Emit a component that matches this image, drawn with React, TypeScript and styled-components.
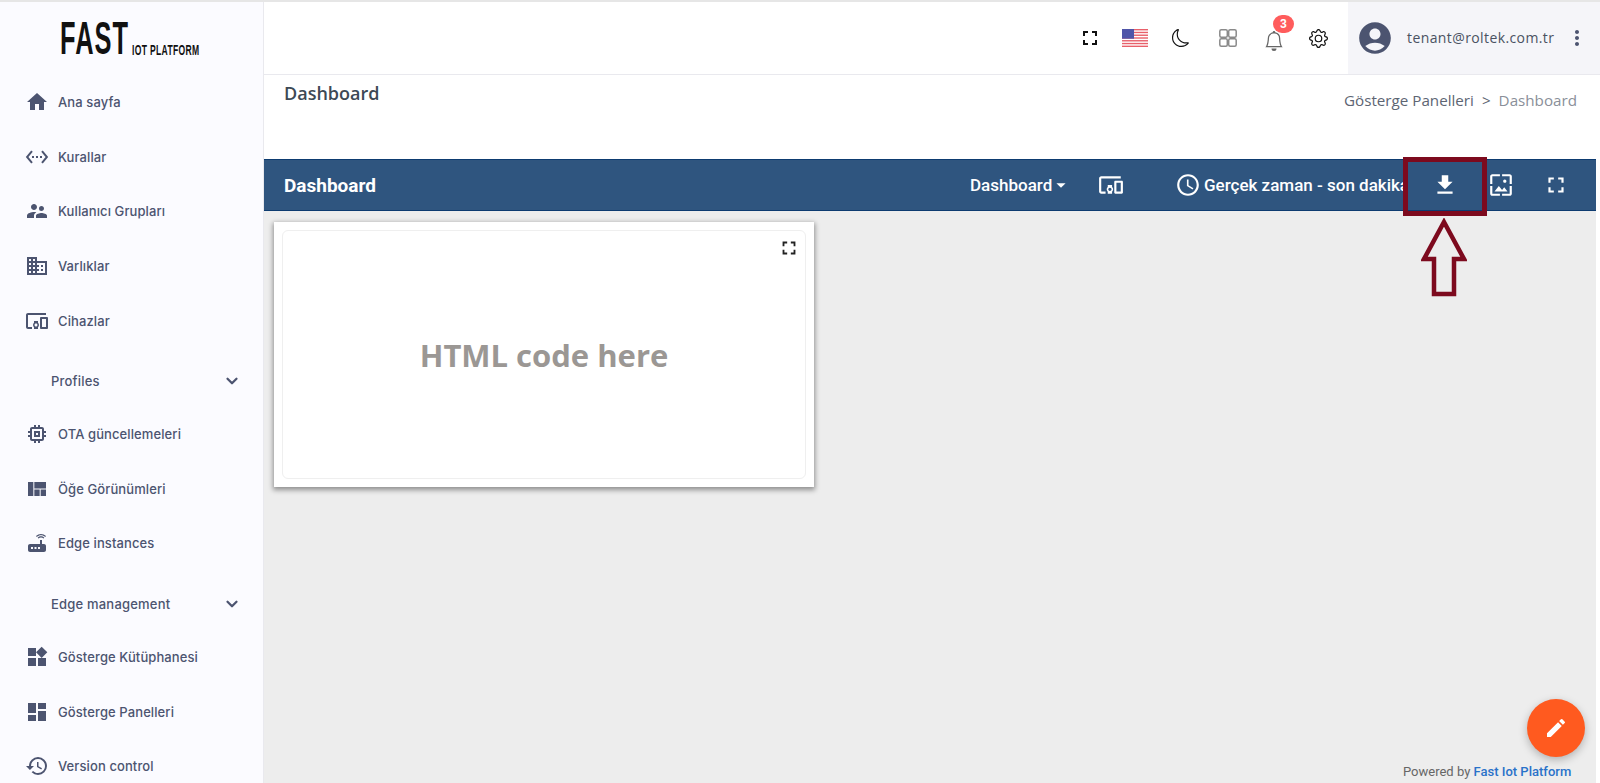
import React from "react";
import styled, { createGlobalStyle } from "styled-components";
import {
  MdHome,
  MdSettingsEthernet,
  MdSupervisorAccount,
  MdDomain,
  MdDevicesOther,
  MdMemory,
  MdViewQuilt,
  MdRouter,
  MdWidgets,
  MdDashboard,
  MdHistory,
  MdFullscreen,
  MdAccountCircle,
  MdMoreVert,
  MdAccessTime,
  MdFileDownload,
  MdOutlineWallpaper,
  MdEdit,
  MdArrowDropDown,
} from "react-icons/md";
import { BsMoon, BsBell, BsGear } from "react-icons/bs";
import { ChevronDown } from "lucide-react";

const GlobalStyle = createGlobalStyle`
  html, body {
    margin: 0;
    height: 100%;
    overflow: hidden;
    background: #fff;
  }
  * {
    box-sizing: border-box;
  }
`;

const Page = styled.div`
  display: flex;
  width: 1600px;
  height: 783px;
  overflow: hidden;
  position: relative;
  font-family: "Inter", "Roboto", sans-serif;
  border-top: 2px solid #e6e6e6;
`;

const Sidebar = styled.aside`
  flex: 0 0 264px;
  background: #fbfbff;
  border-right: 1px solid #e9e9ee;
  color: #4c5470;
`;

const LogoBox = styled.div`
  height: 73px;
  display: flex;
  align-items: flex-end;
  padding: 0 0 20px 60px;
  color: #111;
  font-family: "Liberation Sans", sans-serif;
  font-weight: 700;
`;

const LogoBig = styled.span`
  display: inline-block;
  width: 72px;
  font-size: 47px;
  line-height: 34px;
  height: 34px;
  letter-spacing: 2px;
  transform: scaleX(0.54);
  transform-origin: left center;
  white-space: nowrap;
`;

const LogoSmall = styled.span`
  display: inline-block;
  font-size: 15px;
  line-height: 11px;
  height: 11px;
  letter-spacing: 0.6px;
  transform: scaleX(0.57);
  transform-origin: left center;
  white-space: nowrap;
`;

const NavItem = styled.div`
  height: 54.6px;
  display: flex;
  align-items: center;
  padding-left: 25px;
  font-size: 13px;
  font-weight: 500;
  letter-spacing: 0.1px;

  svg {
    flex: 0 0 24px;
    font-size: 24px;
    margin-right: 9px;
  }
`;

const NavGroup = styled.div`
  height: 59px;
  padding: 8px 22px 0 51px;
  display: flex;
  align-items: center;
  justify-content: space-between;
  font-size: 13px;
  font-weight: 500;
  letter-spacing: 0.2px;
`;

const Main = styled.main`
  flex: 1;
  min-width: 0;
  display: flex;
  flex-direction: column;
  width: 1336px;
`;

const TopBar = styled.header`
  flex: 0 0 73px;
  display: flex;
  justify-content: flex-end;
  background: #fff;
  border-bottom: 1px solid #e9e9ee;
`;

const TopIcons = styled.div`
  display: flex;
  align-items: center;
`;

const TopIcon = styled.div<{ $w: number }>`
  width: ${(p) => p.$w}px;
  height: 100%;
  display: flex;
  align-items: center;
  justify-content: center;
  position: relative;
  color: #111;
`;

const Bell = styled(BsBell)`
  margin-top: 6px;
  color: #666;
`;

const Badge = styled.span`
  position: absolute;
  top: 13px;
  left: 22px;
  width: 21px;
  height: 18px;
  border-radius: 9px;
  background: #ff5c5c;
  color: #fff;
  font: 700 12px "Roboto", sans-serif;
  display: flex;
  align-items: center;
  justify-content: center;
`;

const UserBox = styled.div`
  width: 252px;
  margin-left: 7px;
  background: #f5f5f9;
  display: flex;
  align-items: center;
  padding-left: 8px;
  color: #4c5470;
  font-family: "Open Sans", sans-serif;
  font-size: 14px;
  letter-spacing: 0.4px;
`;

const Email = styled.span`
  margin-left: 13px;
  margin-top: -2px;
  width: 158px;
  color: #4a5262;
  white-space: nowrap;
`;

const PageHead = styled.div`
  flex: 0 0 84px;
  display: flex;
  justify-content: space-between;
  padding: 6px 23px 0 20px;
  background: #fff;
`;

const PageTitle = styled.h1`
  margin: 0;
  font: 600 18px "Open Sans", sans-serif;
  color: #3d4955;
  line-height: 24px;
`;

const Crumbs = styled.div`
  padding-top: 9px;
  font: 400 15.2px "Open Sans", sans-serif;
  color: #5d6573;
  white-space: nowrap;
`;

const CrumbSep = styled.span`
  margin: 0 8px;
`;

const CrumbLast = styled.span`
  color: #8a8f99;
`;

const Canvas = styled.div`
  flex: 1;
  width: 1332px;
  background: #ededed;
  display: flex;
  flex-direction: column;
`;

const DashBar = styled.div`
  flex: 0 0 52px;
  display: flex;
  align-items: center;
  background: #2f557f;
  border-top: 1px solid #0d3b70;
  border-bottom: 1px solid #0d3b70;
  color: #fff;
  font-family: "Roboto", sans-serif;
  padding-left: 20px;
`;

const BarTitle = styled.div`
  width: 686px;
  font-size: 19px;
  font-weight: 700;
`;

const BarMenu = styled.div`
  display: flex;
  align-items: center;
  width: 121px;
  font-size: 17px;
  font-weight: 500;

  svg {
    font-size: 22px;
    margin-left: -2px;
  }
`;

const BarIcon = styled.div<{ $w: number }>`
  flex: 0 0 ${(p) => p.$w}px;
  display: flex;
  justify-content: center;
  font-size: 26px;
`;

const TimeBox = styled.div`
  flex: 0 0 233px;
  overflow: hidden;
  margin: 0 9px 0 44px;
  display: flex;
  align-items: center;
  font-size: 17px;
  font-weight: 500;
  white-space: nowrap;

  svg {
    flex: 0 0 26px;
    font-size: 26px;
    margin-right: 3px;
  }
`;

const WidgetCard = styled.section`
  width: 540px;
  height: 265px;
  margin: 11px 0 0 10px;
  padding: 8px;
  background: #fff;
  box-shadow: 0 2px 5px 1px rgba(0, 0, 0, 0.4);
`;

const WidgetInner = styled.div`
  position: relative;
  height: 100%;
  border: 1px solid #efefef;
  border-radius: 6px;
  display: flex;
  align-items: center;
  justify-content: center;
  font: 700 31px "Open Sans", sans-serif;
  color: #9b9794;
`;

const WidgetExpand = styled.span`
  position: absolute;
  top: 6px;
  right: 5px;
  font-size: 22px;
  line-height: 0;
  color: #222;
`;

const Highlight = styled.div`
  position: absolute;
  left: 1403px;
  top: 155px;
  width: 84px;
  height: 59px;
  border: 5px solid #7d0a1e;
`;

const Arrow = styled.svg`
  position: absolute;
  left: 1421px;
  top: 216px;
`;

const Fab = styled.button`
  position: absolute;
  left: 1527px;
  top: 697px;
  width: 58px;
  height: 58px;
  border: 0;
  border-radius: 50%;
  background: #ff5a1f;
  color: #fff;
  display: flex;
  align-items: center;
  justify-content: center;
  font-size: 24px;
  box-shadow: 0 3px 8px rgba(0, 0, 0, 0.25);
`;

const Powered = styled.div`
  position: absolute;
  left: 1403px;
  top: 762px;
  font: 400 13px "Roboto", sans-serif;
  color: #666;
  white-space: nowrap;
`;

const PoweredLink = styled.span`
  color: #2a72c9;
  font-weight: 500;
`;

const Flag = () => (
  <svg width="26" height="18" viewBox="0 0 26 18">
    <rect width="26" height="18" fill="#fff" />
    {[0, 1, 2, 3, 4, 5, 6].map((i) => (
      <rect key={i} y={i * 2.77} width="26" height="1.39" fill="#e8606a" />
    ))}
    <rect width="12" height="9.7" fill="#4f55a8" />
  </svg>
);

const GridIcon = () => (
  <svg width="18" height="18" viewBox="0 0 18 18" fill="none" stroke="#8a8a8a" strokeWidth="1.5">
    <rect x="0.8" y="0.8" width="7.5" height="7.5" rx="1.5" />
    <rect x="9.7" y="0.8" width="7.5" height="7.5" rx="1.5" />
    <rect x="0.8" y="9.7" width="7.5" height="7.5" rx="1.5" />
    <rect x="9.7" y="9.7" width="7.5" height="7.5" rx="1.5" />
  </svg>
);

const App = () => {
  return (
    <>
      <GlobalStyle />
      <Page>
        <Sidebar>
          <LogoBox>
            <LogoBig>FAST</LogoBig>
            <LogoSmall>IOT PLATFORM</LogoSmall>
          </LogoBox>
          <NavItem><MdHome />Ana sayfa</NavItem>
          <NavItem><MdSettingsEthernet />Kurallar</NavItem>
          <NavItem><MdSupervisorAccount />Kullanıcı Grupları</NavItem>
          <NavItem><MdDomain />Varlıklar</NavItem>
          <NavItem><MdDevicesOther />Cihazlar</NavItem>
          <NavGroup>Profiles<ChevronDown size={18} strokeWidth={3} /></NavGroup>
          <NavItem><MdMemory />OTA güncellemeleri</NavItem>
          <NavItem><MdViewQuilt />Öğe Görünümleri</NavItem>
          <NavItem><MdRouter />Edge instances</NavItem>
          <NavGroup>Edge management<ChevronDown size={18} strokeWidth={3} /></NavGroup>
          <NavItem><MdWidgets />Gösterge Kütüphanesi</NavItem>
          <NavItem><MdDashboard />Gösterge Panelleri</NavItem>
          <NavItem><MdHistory />Version control</NavItem>
        </Sidebar>
        <Main>
          <TopBar>
            <TopIcons>
              <TopIcon $w={45}><MdFullscreen size={24} /></TopIcon>
              <TopIcon $w={45}><Flag /></TopIcon>
              <TopIcon $w={47}><BsMoon size={18} /></TopIcon>
              <TopIcon $w={47}><GridIcon /></TopIcon>
              <TopIcon $w={45}>
                <Bell size={20} />
                <Badge>3</Badge>
              </TopIcon>
              <TopIcon $w={45}><BsGear size={19} /></TopIcon>
            </TopIcons>
            <UserBox>
              <MdAccountCircle size={38} />
              <Email>tenant@roltek.com.tr</Email>
              <MdMoreVert size={24} />
            </UserBox>
          </TopBar>
          <PageHead>
            <PageTitle>Dashboard</PageTitle>
            <Crumbs>
              Gösterge Panelleri<CrumbSep>&gt;</CrumbSep><CrumbLast>Dashboard</CrumbLast>
            </Crumbs>
          </PageHead>
          <Canvas>
            <DashBar>
              <BarTitle>Dashboard</BarTitle>
              <BarMenu>Dashboard<MdArrowDropDown /></BarMenu>
              <BarIcon $w={40}><MdDevicesOther /></BarIcon>
              <TimeBox><MdAccessTime />Gerçek zaman - son dakika</TimeBox>
              <BarIcon $w={56}><MdFileDownload /></BarIcon>
              <BarIcon $w={56}><MdOutlineWallpaper /></BarIcon>
              <BarIcon $w={54}><MdFullscreen /></BarIcon>
            </DashBar>
            <WidgetCard>
              <WidgetInner>
                HTML code here
                <WidgetExpand><MdFullscreen /></WidgetExpand>
              </WidgetInner>
            </WidgetCard>
          </Canvas>
        </Main>
        <Highlight />
        <Arrow width="46" height="79" viewBox="0 0 46 79">
          <path d="M23 4 L43 41 H33 V76 H13 V41 H3 Z" fill="none" stroke="#7d0a1e" strokeWidth="4.5" />
        </Arrow>
        <Fab><MdEdit /></Fab>
        <Powered>Powered by <PoweredLink>Fast Iot Platform</PoweredLink></Powered>
      </Page>
    </>
  );
};

export default App;
